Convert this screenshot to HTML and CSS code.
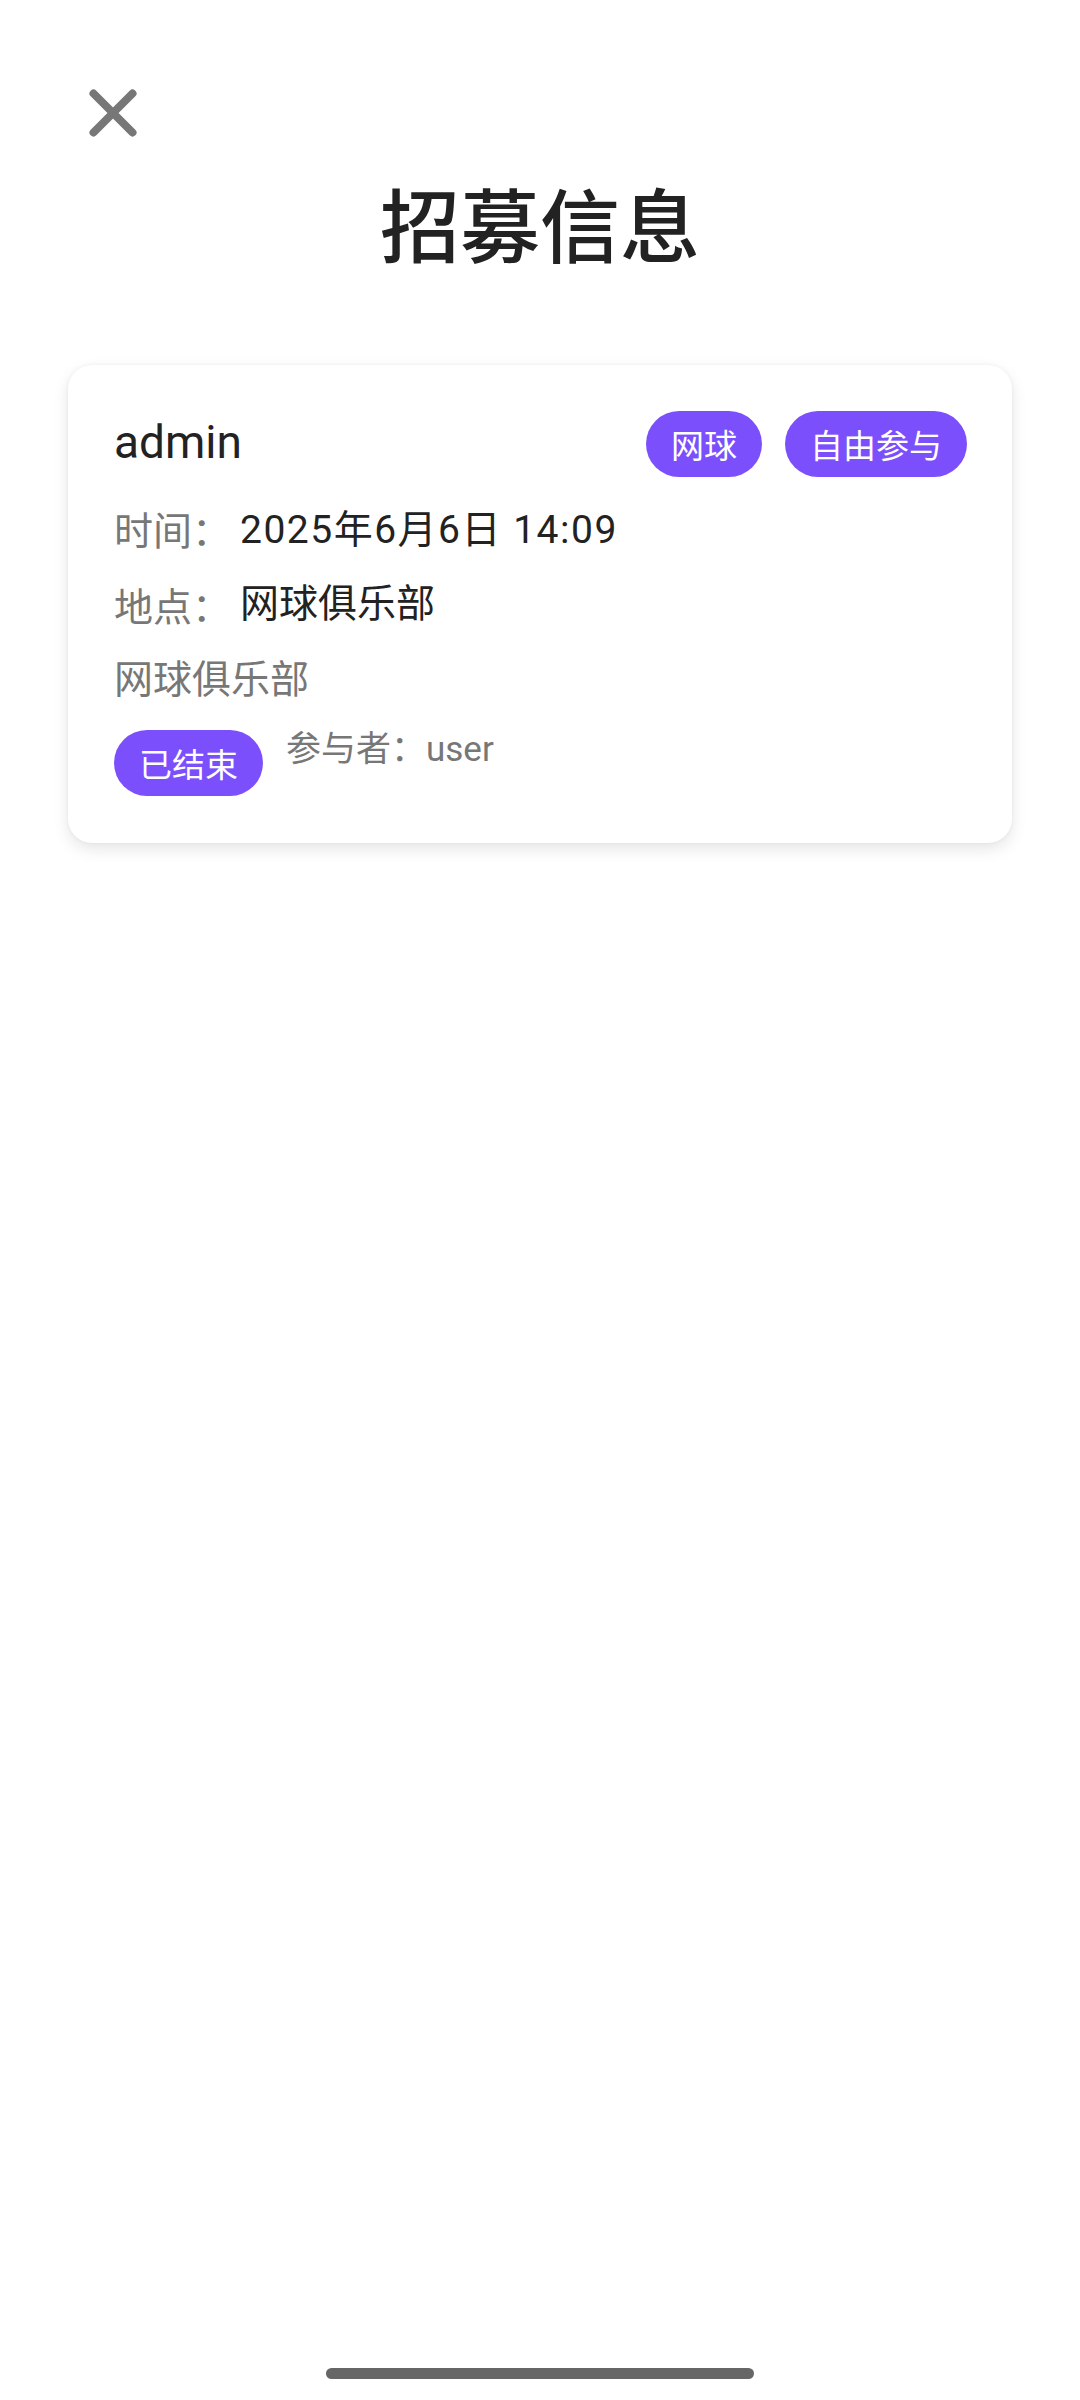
FILE: index.html
```html
<!DOCTYPE html>
<html lang="zh-CN">
<head>
<meta charset="utf-8">
<title>招募信息</title>
<link rel="stylesheet" href="styles.css">
</head>
<body>
<div class="page">
  <div class="topbar">
    <svg class="close" width="48" height="48" viewBox="0 0 48 48">
      <path d="M4.5 4.5 L43.5 43.5 M43.5 4.5 L4.5 43.5" stroke="#777777" stroke-width="8" stroke-linecap="round" fill="none"/>
    </svg>
  </div>
  <h1 class="title">招募信息</h1>
  <div class="card">
    <div class="card-head">
      <div class="name">admin</div>
      <div class="tags">
        <span class="pill">网球</span>
        <span class="pill">自由参与</span>
      </div>
    </div>
    <div class="info">
      <div class="row"><span class="label">时间：</span><span class="value time">2025年6月6日 14:09</span></div>
      <div class="row"><span class="label">地点：</span><span class="value">网球俱乐部</span></div>
      <div class="row desc">网球俱乐部</div>
    </div>
    <div class="card-foot">
      <span class="pill">已结束</span>
      <span class="participants">参与者：user</span>
    </div>
  </div>
  <div class="home-bar"></div>
</div>
</body>
</html>
```
FILE: styles.css
```css
html, body {
  margin: 0;
  padding: 0;
  background: #ffffff;
}

body {
  font-family: Roboto, "Noto Sans CJK SC", "Noto Sans", sans-serif;
  color: #222222;
}

.page {
  width: 1080px;
  height: 2400px;
  display: flex;
  flex-direction: column;
  box-sizing: border-box;
}

.topbar {
  padding: 89px 0 0 89px;
  height: 48px;
}

.close {
  display: block;
}

.title {
  margin: 44px 0 0;
  font-family: "Noto Sans CJK SC", sans-serif;
  font-size: 80px;
  line-height: 80px;
  font-weight: 500;
  text-align: center;
  color: #222222;
}

.card {
  margin: 104px 68px 0;
  padding: 46px 45px 47px 46px;
  background: #ffffff;
  border-radius: 24px;
  box-shadow: 0 6px 16px rgba(0, 0, 0, 0.10), 0 0 4px rgba(0, 0, 0, 0.05);
}

.card-head {
  display: flex;
  justify-content: space-between;
  align-items: flex-start;
}

.name {
  font-family: Roboto, "Noto Sans CJK SC", sans-serif;
  font-size: 46px;
  line-height: 46px;
  margin-top: 8px;
  color: #222222;
}

.tags {
  display: flex;
  gap: 23px;
}

.pill {
  display: inline-block;
  height: 66px;
  line-height: 66px;
  padding: 0 25px;
  border-radius: 33px;
  background: #7b4ffb;
  color: #ffffff;
  font-family: "Noto Sans CJK SC", sans-serif;
  font-size: 33px;
  white-space: nowrap;
}

.info {
  margin-top: 25px;
  display: flex;
  flex-direction: column;
  gap: 24px;
}

.row {
  display: flex;
  font-size: 39px;
  line-height: 52px;
  white-space: nowrap;
}

.label {
  color: #777777;
  margin-right: 9px;
  font-family: "Noto Sans CJK SC", sans-serif;
}

.value {
  color: #222222;
}

.time {
  letter-spacing: 1.5px;
  position: relative;
  top: 2px;
}

.desc {
  color: #777777;
}

.card-foot {
  margin-top: 24px;
  display: flex;
  align-items: flex-start;
  gap: 23px;
}

.participants {
  font-size: 35px;
  line-height: 40px;
  color: #777777;
}

.home-bar {
  margin: auto auto 21px;
  width: 428px;
  height: 11px;
  border-radius: 6px;
  background: #666666;
}
```
